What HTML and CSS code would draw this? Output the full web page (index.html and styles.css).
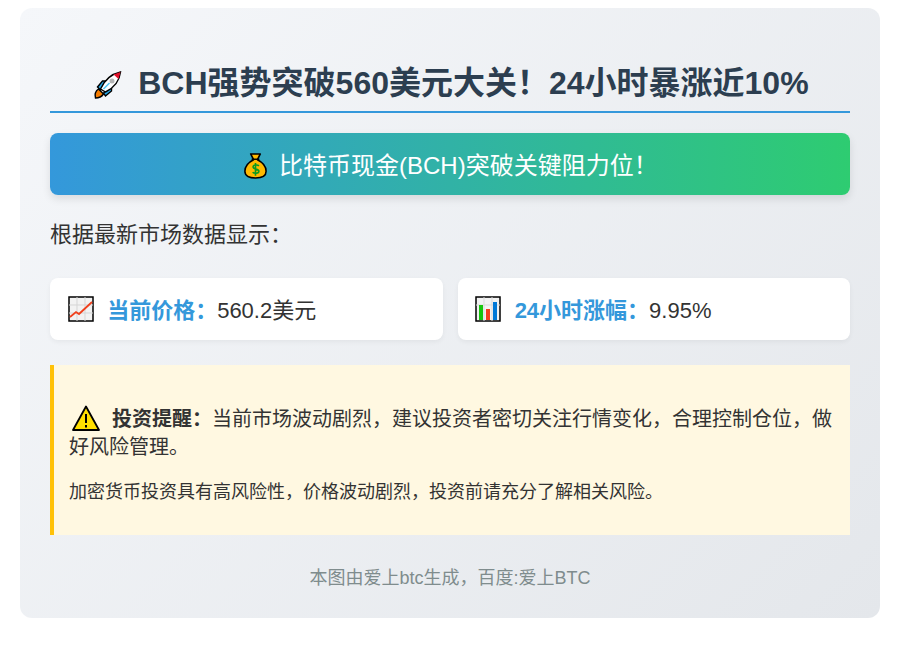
FILE: index.html
```html
<!DOCTYPE html>
<html lang="zh">
<head>
<meta charset="utf-8">
<title>BCH</title>
<link rel="stylesheet" href="styles.css">
</head>
<body>
<main class="card">
  <h1 class="title">
    <svg class="ico ico-title" viewBox="0 0 28 28"><path d="M2 27c-1-4 0-7 3-9l5 5c-2 3-5 4-8 4z" fill="#f57c00" stroke="#000" stroke-width="1.400"/><path d="M4 16l5-6 5 0-7 9z" fill="#29a9e8" stroke="#000" stroke-width="1.400"/><path d="M12 25l6-5 0-5-8 7z" fill="#29a9e8" stroke="#000" stroke-width="1.400"/><path d="M7 18C11 9 18 3 27 1c-1 9-7 16-15 20z" fill="#fff" stroke="#000" stroke-width="1.400"/><path d="M20 3.500l7-2.500-2 7z" fill="#e0102a"/><circle cx="18.500" cy="10" r="2.500" fill="#b5b5b5"/><path d="M10 18l6-6" stroke="#54c6f2" stroke-width="1.600"/></svg>
    BCH强势突破560美元大关！24小时暴涨近10%
  </h1>
  <div class="banner">
    <svg class="ico ico-bag" viewBox="0 0 24 28"><path d="M7 2h10l-3 6c6 3 9 8 9 12 0 5-5 7-11 7S1 25 1 20c0-4 3-9 9-12z" fill="#ffb900" stroke="#000" stroke-width="1.600" stroke-linejoin="round"/><path d="M8 7.500h8" stroke="#000" stroke-width="1.500"/><path d="M15.500 14.500c-1-1.500-6-1.500-6 1s6 2 6 4.500-5 2.500-6.500 1M12 11.500v13" fill="none" stroke="#0a9a20" stroke-width="1.700"/></svg>
    比特币现金(BCH)突破关键阻力位！
  </div>
  <p class="lead">根据最新市场数据显示：</p>
  <div class="stats">
    <div class="stat">
      <svg class="ico ico-chart" viewBox="0 0 26 26"><rect x="1" y="1" width="24" height="24" fill="#f2f2f2" stroke="#000" stroke-width="1.500"/><path d="M9 1v24M17 1v24M1 9h24M1 17h24" stroke="#d5d5d5"/><path d="M2 21l6-5 3 2 13-12" fill="none" stroke="#f0401c" stroke-width="1.800"/></svg>
      <strong class="label">当前价格：</strong>560.2美元
    </div>
    <div class="stat">
      <svg class="ico ico-chart" viewBox="0 0 26 26"><rect x="1" y="1" width="24" height="24" fill="#f2f2f2" stroke="#000" stroke-width="1.500"/><path d="M9 1v24M17 1v24M1 9h24" stroke="#d9d9d9"/><rect x="4" y="9" width="4" height="15" fill="#16c60c"/><rect x="11" y="13" width="4" height="11" fill="#f7401c"/><rect x="18" y="6" width="4" height="18" fill="#0078d7"/></svg>
      <strong class="label">24小时涨幅：</strong>9.95%
    </div>
  </div>
  <section class="alert">
    <p class="alert-main"><svg class="ico ico-warn" viewBox="0 0 28 26"><path d="M14 1.500L27 25H1z" fill="#ffdf00" stroke="#000" stroke-width="1.800" stroke-linejoin="round"/><path d="M14 9v9M14 20v2.500" stroke="#000" stroke-width="2"/></svg><strong>投资提醒：</strong>当前市场波动剧烈，建议投资者密切关注行情变化，合理控制仓位，做好风险管理。</p>
    <p class="alert-note">加密货币投资具有高风险性，价格波动剧烈，投资前请充分了解相关风险。</p>
  </section>
  <footer class="foot">本图由爱上btc生成，百度:爱上BTC</footer>
</main>
</body>
</html>
```
FILE: styles.css
```css
* { box-sizing: border-box; }
html, body { margin: 0; background: #fff; }
body { padding: 8px 20px; font-family: "Liberation Sans", "Noto Sans CJK SC", sans-serif; color: #333; }
.card { height: 610px; padding: 50px 30px 0; border-radius: 12px; background: linear-gradient(135deg, #f5f7fa, #e4e7eb); }
.ico { display: inline-block; }
.title { margin: 0; height: 55px; padding-left: 2px; border-bottom: 2px solid #3498db; color: #2c3e50; font-size: 32px; line-height: 50px; font-weight: 700; text-align: center; white-space: nowrap; }
.ico-title { width: 29px; height: 28px; vertical-align: -5px; margin-right: 7px; }
.banner { margin-top: 20px; height: 62px; padding-left: 1px; border-radius: 8px; background: linear-gradient(90deg, #3498db, #2ecc71); box-shadow: 0 4px 8px rgba(0,0,0,.1); color: #fff; font-size: 24px; line-height: 66px; text-align: center; }
.ico-bag { width: 25px; height: 27px; vertical-align: -5px; margin-right: 4px; }
.lead { margin: 24px 0 0; font-size: 22px; line-height: 32px; }
.stats { display: grid; grid-template-columns: 1fr 1fr; gap: 15px; margin-top: 27px; }
.stat { height: 62px; padding: 0 18px; border-radius: 8px; background: #fff; box-shadow: 0 2px 5px rgba(0,0,0,.05); font-size: 22px; line-height: 66px; white-space: nowrap; }
.stat:last-child { padding-left: 17px; }
.stat:last-child .ico-chart { margin-right: 8px; }
.ico-chart { width: 26px; height: 26px; vertical-align: -4px; margin-right: 7px; }
.label { color: #3498db; font-size: 22px; }
.alert { margin-top: 25px; height: 170px; padding: 40px 14px 0 15px; border-left: 4px solid #ffc107; background: #fff8e1; }
.alert-main { margin: 0; font-size: 20px; line-height: 28px; }
.ico-warn { width: 28px; height: 26px; vertical-align: -5px; margin: 0 12px 0 3px; }
.alert-note { margin: 18px 0 0; font-size: 18px; line-height: 26px; }
.foot { margin-top: 30px; color: #7f8c8d; font-size: 18px; line-height: 26px; text-align: center; }
```
